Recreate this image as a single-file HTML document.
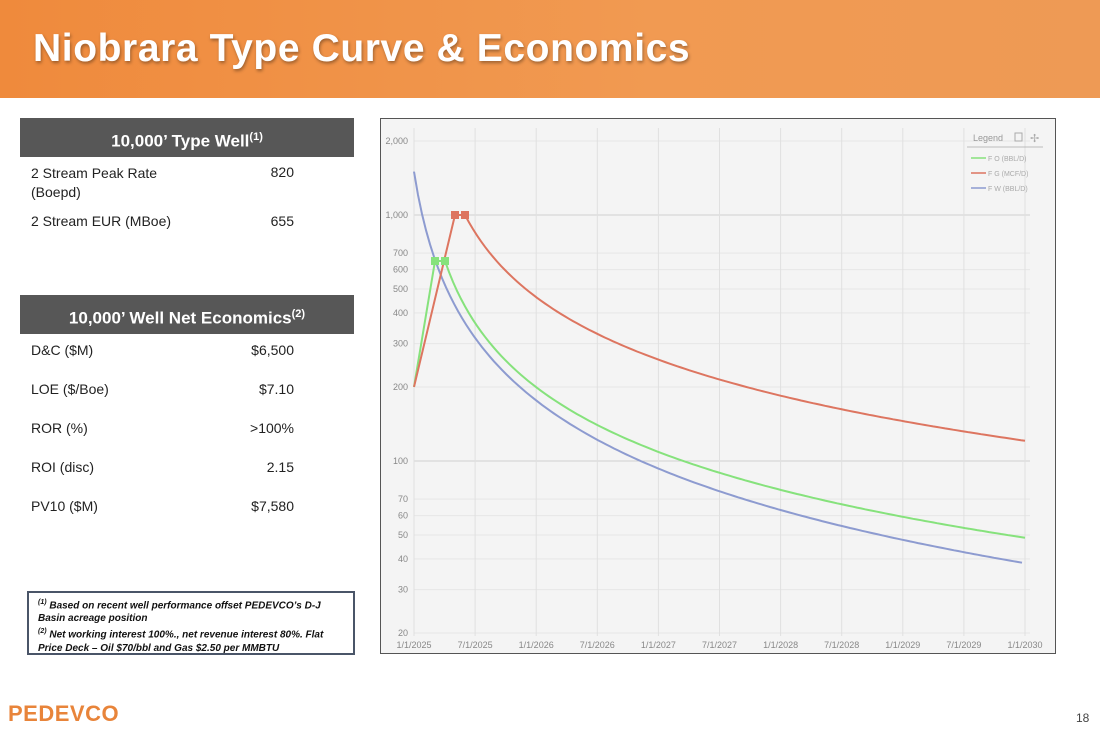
<!DOCTYPE html>
<html><head><meta charset="utf-8"><style>
body{margin:0;width:1100px;height:733px;background:#fff;position:relative;overflow:hidden;font-family:"Liberation Sans",sans-serif}
.top{position:absolute;left:0;top:0;width:1100px;height:98px;background:linear-gradient(90deg,#ef8a3c,#f19a52 60%,#ee9a55)}
.top h1{position:absolute;left:33px;top:27px;margin:0;color:#fff;font-size:39px;font-weight:bold;letter-spacing:0.6px;text-shadow:1px 2px 3px rgba(0,0,0,.35)}
.hdr{position:absolute;left:20px;width:334px;height:39px;background:#575757;color:#fff;font-weight:bold;font-size:17px;text-align:center;line-height:39px}
.hdr sup{font-size:11px}
.row{position:absolute;left:31px;font-size:14px;color:#222}
.val{position:absolute;right:806px;font-size:14px;color:#222}
.note{position:absolute;left:27px;top:591px;width:328px;height:64px;border:2px solid #4a5568;font-size:10px;font-weight:bold;font-style:italic;line-height:13px;padding:3px 0 0 9px;box-sizing:border-box;color:#111}
.note sup{font-size:7px}
.chart{position:absolute;left:380px;top:118px;width:676px;height:536px;border:1px solid #555;box-sizing:border-box;background:#f4f4f4}
.logo{position:absolute;left:8px;top:701px;color:#e8843a;font-weight:bold;font-size:22px;letter-spacing:0.5px}
.pg{position:absolute;left:1076px;top:711px;font-size:12px;color:#444}
</style></head><body>
<div class="top"><h1>Niobrara Type Curve &amp; Economics</h1></div>
<div class="hdr" style="top:118px">10,000’ Type Well<sup>(1)</sup></div>
<div class="row" style="top:164px;line-height:19px">2 Stream Peak Rate<br>(Boepd)</div><div class="val" style="top:164px">820</div>
<div class="row" style="top:213px">2 Stream EUR (MBoe)</div><div class="val" style="top:213px">655</div>
<div class="hdr" style="top:295px">10,000’ Well Net Economics<sup>(2)</sup></div>
<div class="row" style="top:342px">D&amp;C ($M)</div><div class="val" style="top:342px">$6,500</div>
<div class="row" style="top:381px">LOE ($/Boe)</div><div class="val" style="top:381px">$7.10</div>
<div class="row" style="top:420px">ROR (%)</div><div class="val" style="top:420px">&gt;100%</div>
<div class="row" style="top:459px">ROI (disc)</div><div class="val" style="top:459px">2.15</div>
<div class="row" style="top:498px">PV10 ($M)</div><div class="val" style="top:498px">$7,580</div>
<div class="note"><sup>(1)</sup> Based on recent well performance offset PEDEVCO’s D-J<br>Basin acreage position<br><sup>(2)</sup> Net working interest 100%., net revenue interest 80%. Flat<br>Price Deck – Oil $70/bbl and Gas $2.50 per MMBTU</div>
<div class="chart"></div>
<svg id="s" style="position:absolute;left:0;top:0" width="1100" height="733" font-family="Liberation Sans,sans-serif"></svg>
<div class="logo">PEDEVCO</div>
<div class="pg">18</div>
<script>
var s=document.getElementById('s'),h='';
function y(v){return 461-(Math.log10(v)-2)*246}
var ticks=[20,30,40,50,60,70,100,200,300,400,500,600,700,1000,2000];
ticks.forEach(function(v){var yy=y(v);h+='<line x1="414" x2="1030" y1="'+yy+'" y2="'+yy+'" stroke="'+(v==100||v==1000?'#d0d0d0':'#e6e6e6')+'"/>';
h+='<text x="408" y="'+(yy+3)+'" font-size="9" fill="#888" text-anchor="end">'+(v>=1000?v.toLocaleString('en-US'):v)+'</text>'});
var lab=['1/1/2025','7/1/2025','1/1/2026','7/1/2026','1/1/2027','7/1/2027','1/1/2028','7/1/2028','1/1/2029','7/1/2029','1/1/2030'];
for(var i=0;i<11;i++){var x=414+i*61.1;h+='<line x1="'+x+'" x2="'+x+'" y1="128" y2="636" stroke="#e0e0e0"/>';h+='<text x="'+x+'" y="648" font-size="9" fill="#888" text-anchor="middle">'+lab[i]+'</text>';}
function curve(x0,qi,a,n,pre){var p=pre;for(var x=x0;x<=1025;x+=4){var q=qi/Math.pow(1+a*(x-x0),n);p+=' L'+x+' '+y(q).toFixed(1)}return p}
h+='<path d="'+curve(414,1500,0.06,1.01,'M414 '+y(1500))+'" fill="none" stroke="#8d9bd0" stroke-width="2"/>';
h+='<path d="'+curve(445,650,0.031,0.88,'M414 '+y(200)+' L435 '+y(650)+' L445 '+y(650))+'" fill="none" stroke="#86e27c" stroke-width="2"/>';
h+='<path d="'+curve(465,1000,0.022,0.816,'M414 '+y(200)+' L455 '+y(1000)+' L465 '+y(1000))+'" fill="none" stroke="#dd7560" stroke-width="2"/>';
[[435,650,'#86e27c'],[445,650,'#86e27c'],[455,1000,'#dd7560'],[465,1000,'#dd7560']].forEach(function(m){h+='<rect x="'+(m[0]-4)+'" y="'+(y(m[1])-4)+'" width="8" height="8" fill="'+m[2]+'"/>'});
h+='<text x="973" y="141" font-size="9" fill="#999">Legend</text><rect x="1015" y="133" width="7" height="8" fill="none" stroke="#aaa"/><text x="1030" y="142" font-size="11" fill="#aaa">✢</text><line x1="967" x2="1043" y1="147" y2="147" stroke="#bbb"/>';
[['#86e27c','F O (BBL/D)',158],['#dd7560','F G (MCF/D)',173],['#8d9bd0','F W (BBL/D)',188]].forEach(function(l){h+='<line x1="971" x2="986" y1="'+l[2]+'" y2="'+l[2]+'" stroke="'+l[0]+'" stroke-width="1.5"/><text x="988" y="'+(l[2]+3)+'" font-size="7" fill="#aaa">'+l[1]+'</text>'});
s.innerHTML=h;
</script>
</body></html>
